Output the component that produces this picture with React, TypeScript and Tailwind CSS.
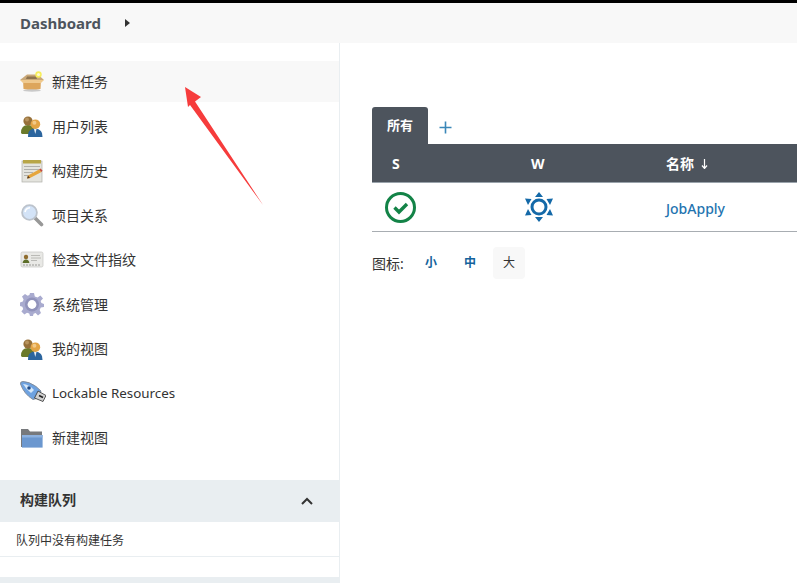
import React from 'react';

const cjk = "font-['Noto_Sans','Noto_Sans_CJK_SC',sans-serif]";

const BoxIcon = () => (
    <svg width="24" height="24" viewBox="0 0 24 24">
        <path d="M0 10 L7 4.5 H18 L24 10 L12 12 Z" fill="#c9a878"/>
        <path d="M3 10 H21 L20.5 19 Q12 21 3.5 19 Z" fill="#dda65c"/>
        <path d="M0 10 L3 13 H21 L24 10 Z" fill="#efc98e"/>
        <path d="M7 6.5 H16 L17 9 H6 Z" fill="#8f744f"/>
        <ellipse cx="12" cy="20.5" rx="9" ry="1.2" fill="#c9c9c9"/>
        <circle cx="18.5" cy="4.5" r="3.2" fill="#f7ee5a"/>
        <circle cx="18.5" cy="4.5" r="1.6" fill="#fffbd0"/>
    </svg>
);

const UsersIcon = () => (
    <svg width="24" height="24" viewBox="0 0 24 24">
        <path d="M1 19 Q1 11 8 11 Q13 11 14 15 L10 20 H2 Z" fill="#6b7a2a"/>
        <circle cx="8" cy="7" r="4.6" fill="#96703a"/>
        <circle cx="7" cy="5.6" r="2" fill="#b8945f"/>
        <path d="M8 23 Q7 15 15 14.5 Q23 15 22.5 23 Z" fill="#2c659e"/>
        <path d="M14 15 H16.5 L15.3 20 Z" fill="#e8eef4"/>
        <circle cx="15.4" cy="10.2" r="4.8" fill="#e3a445"/>
        <circle cx="14.4" cy="8.8" r="2" fill="#f2c987"/>
    </svg>
);

const NotepadIcon = () => (
    <svg width="24" height="24" viewBox="0 0 24 24">
        <rect x="2" y="2" width="20" height="21" fill="#e4e4de" stroke="#b0b0aa" strokeWidth="0.7"/>
        <rect x="3" y="1" width="18" height="3.5" fill="#b8a647"/>
        <path d="M4 7.5 H20 M4 10.5 H19 M4 13.5 H13 M4 16.5 H10" stroke="#a9a9a5" strokeWidth="0.9"/>
        <path d="M7 19.5 L8 16.5 L19 10.5 L21.5 13 L10 19 Z" fill="#e6a63c"/>
        <path d="M7 19.5 L8 16.5 L10 19 Z" fill="#5b3d20"/>
        <path d="M19 10.5 L21.5 13 L22.5 11.5 L20.5 9.5 Z" fill="#c44a3c"/>
    </svg>
);

const SearchIcon = () => (
    <svg width="24" height="24" viewBox="0 0 24 24">
        <path d="M15 15 L21.5 21.5" stroke="#989898" strokeWidth="3.6" strokeLinecap="round"/>
        <circle cx="9.5" cy="9.5" r="7.4" fill="#d3e3f7" stroke="#bcc3cc" strokeWidth="1.8"/>
        <path d="M5 9 Q6 5 10 4.8" stroke="#fff" strokeWidth="1.6" fill="none"/>
    </svg>
);

const CardIcon = () => (
    <svg width="24" height="24" viewBox="0 0 24 24">
        <rect x="1" y="4" width="22" height="15" rx="1.5" fill="#e9e9e6" stroke="#c6c6c2" strokeWidth="0.7"/>
        <circle cx="6" cy="9" r="2.2" fill="#8f6c2e"/>
        <path d="M2.6 15 Q3 11.4 6 11.4 Q9 11.4 9.4 15 Z" fill="#5d6f2a"/>
        <path d="M11 7.5 H20 M11 10 H21 M11 12.5 H17" stroke="#b4b4b0" strokeWidth="0.9"/>
        <path d="M3 17 H21" stroke="#9a9a97" strokeWidth="1" strokeDasharray="2 1"/>
    </svg>
);

const GearIcon = () => (
    <svg width="24" height="24" viewBox="0 0 24 24">
        <path
            d="M10 1 H14 L14.8 4.4 L17.6 5.6 L20.4 3.6 L23 6.6 L20.6 9 L21.4 11 L24 12 V15 L20.8 15.6 L19.6 18 L21 21 L18 23.4 L15.6 21 L13.6 21.8 L13 24 H10 L9.2 21.6 L7 20.8 L4.4 22.4 L1.4 19.6 L3.2 17 L2.4 14.8 L0 14 V10.4 L2.8 9.6 L3.6 7.4 L2 4.6 L5 2 L7.6 3.8 L9.4 3 Z"
            fill="#a9abcf"
        />
        <circle cx="12" cy="12.5" r="7" fill="#9193bb"/>
        <circle cx="12" cy="12.5" r="4.4" fill="#fff"/>
    </svg>
);

const UsbIcon = () => (
    <svg width="26" height="24" viewBox="0 0 26 24">
        <path d="M0.5 3 Q0 0.5 3 0.5 Q9 0.5 16 5.5 L21 10 L18 17 L13 18.5 Q4 13 0.5 3 Z" fill="#6ea2e0" stroke="#7f8792" strokeWidth="0.9"/>
        <path d="M3 3 Q9 3.5 14 9 L11 12 Q6 8 3 3 Z" fill="#d7e8f8"/>
        <circle cx="9" cy="7" r="1.8" fill="#1f4a86"/>
        <path d="M18 10 L26 14.5 L23 20.5 L14.5 17 Z" fill="#d0d0d0" stroke="#333" strokeWidth="0.8"/>
        <path d="M19 14.5 L23 16.5" stroke="#222" strokeWidth="1.6"/>
    </svg>
);

const FolderIcon = () => (
    <svg width="24" height="24" viewBox="0 0 24 24">
        <path d="M1 3 H8 L10 5.5 H22 V21 H1 Z" fill="#77797c"/>
        <path d="M2 9 H22.6 V21.6 H2 Z" fill="#6b97cf"/>
        <path d="M2 9 H22.6 V11.5 H2 Z" fill="#8db1df"/>
    </svg>
);

const navItems = [
    {label: '新建任务', Icon: BoxIcon, active: true},
    {label: '用户列表', Icon: UsersIcon},
    {label: '构建历史', Icon: NotepadIcon},
    {label: '项目关系', Icon: SearchIcon},
    {label: '检查文件指纹', Icon: CardIcon},
    {label: '系统管理', Icon: GearIcon},
    {label: '我的视图', Icon: UsersIcon},
    {label: 'Lockable Resources', Icon: UsbIcon},
    {label: '新建视图', Icon: FolderIcon},
];

const App = () => {
    return (
        <div className={`relative w-[797px] h-[583px] overflow-hidden bg-white ${cjk} text-[#333]`}>
            <div className="h-[3px] bg-black"/>
            <div className="h-10 bg-[#f8f8f8] flex items-center pl-5">
                <span className="text-[15px] font-bold text-[#4d545d]">Dashboard</span>
                <svg className="ml-[24px]" width="5" height="8" viewBox="0 0 5 8">
                    <path d="M0 0 L5 4 L0 8 Z" fill="#333"/>
                </svg>
            </div>

            <div className="flex h-[540px]">
                <aside className="w-[340px] shrink-0 border-r border-[#e9eef1] pt-[18px]">
                    <nav className="flex flex-col gap-[3.5px]">
                        {navItems.map(({label, Icon, active}) => (
                            <div
                                key={label}
                                className={`h-[41px] flex items-center pl-5 text-[14px] text-[#333] ${active ? 'bg-[#f8f8f8]' : ''}`}
                            >
                                <span className="w-8 shrink-0"><Icon/></span>
                                <span className={label.startsWith('Lockable') ? 'text-[13.4px]' : ''}>{label}</span>
                            </div>
                        ))}
                    </nav>

                    <section className="mt-[22px]">
                        <div className="h-[42px] bg-[#e9eef1] flex items-center justify-between pl-5 pr-[25px]">
                            <span className="text-[14px] font-bold text-[#333] pb-[3px]">构建队列</span>
                            <svg width="14" height="14" viewBox="0 0 14 14">
                                <path d="M2 10 L7 5 L12 10" fill="none" stroke="#333" strokeWidth="2"/>
                            </svg>
                        </div>
                        <div className="h-[35px] flex items-center pl-4 pt-[3px] text-[12px] border-b border-[#e9eef1]">
                            队列中没有构建任务
                        </div>
                    </section>
                    <div className="h-[30px] mt-5 bg-[#e9eef1]"/>
                </aside>

                <main className="flex-1 pl-8 pt-16">
                    <div className="flex items-stretch h-[37px]">
                        <div className="w-14 bg-[#4d545d] rounded-t-[3px] flex items-center justify-center text-[13px] font-bold text-white">
                            所有
                        </div>
                        <svg className="ml-[11px] mt-[14px]" width="13" height="13" viewBox="0 0 13 13">
                            <path d="M6.5 0.5 V12.5 M0.5 6.5 H12.5" stroke="#3a87b8" strokeWidth="1.6"/>
                        </svg>
                    </div>

                    <div className="grid grid-cols-[146px_135px_1fr] h-[39px] items-center bg-[#4d545d] border-b border-[#9aa3ab] text-[14px] font-bold text-white">
                        <span className="pl-5 pt-px">S</span>
                        <span className="pl-[13px] pt-px">W</span>
                        <span className="pl-[13px] pt-px flex items-center gap-[7px]">
                            名称
                            <svg width="7" height="10" viewBox="0 0 7 10">
                                <path d="M3.5 0 V9 M1 6.5 L3.5 9.5 L6 6.5" fill="none" stroke="#fff" strokeWidth="1.2"/>
                            </svg>
                        </span>
                    </div>

                    <div className="grid grid-cols-[146px_135px_1fr] h-[49px] items-center border-b border-[#a8adb2]">
                        <span className="pl-[13px]">
                            <svg className="block" width="31" height="31" viewBox="0 0 31 31">
                                <circle cx="15.5" cy="15.5" r="14" fill="none" stroke="#138347" strokeWidth="3"/>
                                <path d="M9.5 15.5 L14 20 L22 12" fill="none" stroke="#138347" strokeWidth="3.4"/>
                            </svg>
                        </span>
                        <span className="pl-[6px]">
                            <svg className="block" width="30" height="32" viewBox="0 0 30 32">
                                <circle cx="15" cy="16" r="7" fill="none" stroke="#1469a8" strokeWidth="3"/>
                                <path d="M15 1 L19 6 H11 Z M15 31 L11 26 H19 Z" fill="#1469a8"/>
                                <path d="M1 7.5 L7.5 8 L4 14 Z M29 7.5 L26 14 L22.5 8 Z M1 24.5 L4 18 L7.5 24 Z M29 24.5 L22.5 24 L26 18 Z" fill="#1469a8"/>
                            </svg>
                        </span>
                        <span className="pl-[13px] pt-[2px] text-[14px] font-medium text-[#1f74b0]">JobApply</span>
                    </div>

                    <div className="flex items-center mt-[15px] text-[14px]">
                        <span className="w-[40px]">图标:</span>
                        <span className="w-[38px] text-center text-[12px] font-bold text-[#14639c]">小</span>
                        <span className="w-[40px] text-center text-[12px] font-bold text-[#14639c]">中</span>
                        <span className="w-8 h-8 ml-[3px] flex items-center justify-center rounded bg-[#f8f8f8] text-[12px]">大</span>
                    </div>
                </main>
            </div>

            <svg className="absolute left-[180px] top-[82px] pointer-events-none" width="90" height="130" viewBox="180 82 90 130">
                <path d="M185 87 L201 97 L195 101.5 L263 205 L190 105 L188 107 Z" fill="#f63c3c"/>
            </svg>
        </div>
    );
};

export default App;
